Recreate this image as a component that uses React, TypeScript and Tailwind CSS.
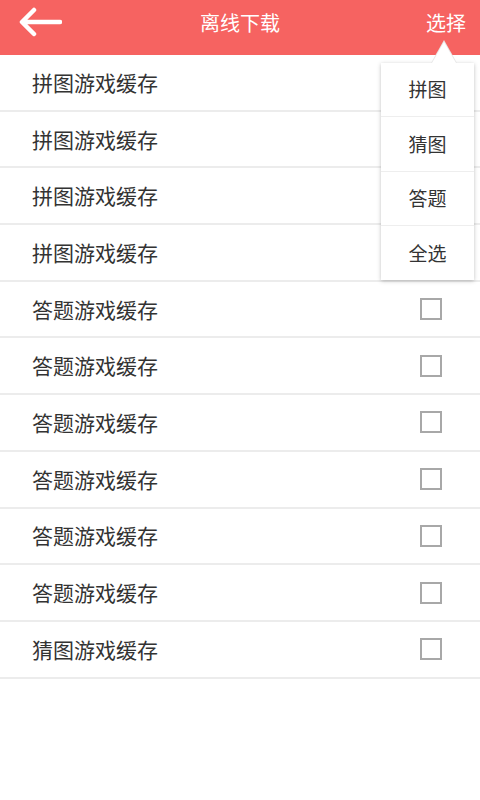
import React from "react";

const rows = [
  { t: "拼图游戏缓存", cb: false },
  { t: "拼图游戏缓存", cb: false },
  { t: "拼图游戏缓存", cb: false },
  { t: "拼图游戏缓存", cb: false },
  { t: "答题游戏缓存", cb: true },
  { t: "答题游戏缓存", cb: true },
  { t: "答题游戏缓存", cb: true },
  { t: "答题游戏缓存", cb: true },
  { t: "答题游戏缓存", cb: true },
  { t: "答题游戏缓存", cb: true },
  { t: "猜图游戏缓存", cb: true },
];

const menu = ["拼图", "猜图", "答题", "全选"];

export default function App() {
  return (
    <div
      className="relative w-[480px] h-[800px] bg-white overflow-hidden"
      style={{ fontFamily: '"Noto Sans CJK SC", "Noto Sans", sans-serif' }}
    >
      <header className="relative h-[55px] bg-[#f66361] flex items-center justify-between pl-[18px] pr-[14px] pb-[9px]">
        <svg width="44" height="34" viewBox="0 0 44 34" fill="none">
          <path
            d="M42 16H5M16 4L4 16L16 28"
            stroke="white"
            strokeWidth="4.5"
            strokeLinecap="round"
            strokeLinejoin="round"
          />
        </svg>
        <div className="absolute left-0 right-0 top-0 h-[46px] flex items-center justify-center pointer-events-none">
          <span className="text-white text-[20px] leading-none">离线下载</span>
        </div>
        <span className="text-white text-[20px] leading-none">选择</span>
      </header>
      <div className="flex flex-col">
        {rows.map((r, i) => (
          <div
            key={i}
            className="h-[56.7px] border-b-2 border-[#ececec] flex items-center justify-between pl-[32px] pr-[38px]"
          >
            <span className="text-[21px] text-[#333] leading-none">{r.t}</span>
            {r.cb && (
              <span className="w-[22px] h-[22px] border-2 border-[#a8a8a8] bg-white" />
            )}
          </div>
        ))}
      </div>

      <div className="absolute left-[381px] top-[40px] w-[93px]">
        <div className="absolute left-[50px] top-0 w-0 h-0 border-l-[13px] border-r-[13px] border-b-[23px] border-l-transparent border-r-transparent border-b-[#e8e8e8]" />
        <div className="absolute left-[51px] top-[2px] w-0 h-0 border-l-[12px] border-r-[12px] border-b-[21px] border-l-transparent border-r-transparent border-b-white" />
        <div className="mt-[23px] bg-white shadow-[0_1px_4px_rgba(0,0,0,0.25)] flex flex-col">
          {menu.map((m, i) => (
            <div
              key={i}
              className={`h-[54.3px] flex items-center justify-center text-[19px] text-[#333] ${
                i < 3 ? "border-b border-[#eeeeee]" : ""
              }`}
            >
              {m}
            </div>
          ))}
        </div>
      </div>
    </div>
  );
}
